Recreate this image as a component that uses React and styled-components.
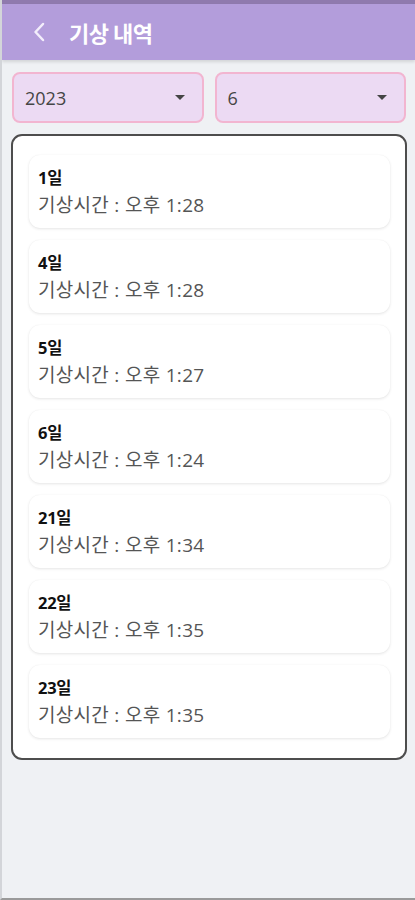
import React from "react";
import styled, { createGlobalStyle } from "styled-components";

const Global = createGlobalStyle`
  html, body { margin: 0; padding: 0; }
  body { background: #eff1f4; font-family: "Open Sans", "Noto Sans CJK KR", sans-serif; }
  * { box-sizing: border-box; }
`;

const Screen = styled.div`
  width: 415px;
  height: 900px;
  background: #eff1f4;
  border-left: 2px solid #d3d5d9;
  border-bottom: 2px solid #9a9a9a;
  display: flex;
  flex-direction: column;
  overflow: hidden;
`;

const StatusStrip = styled.div`
  height: 4px;
  background: #8f7aae;
`;

const Header = styled.header`
  height: 56px;
  background: #b39ddb;
  display: flex;
  align-items: center;
  padding-left: 29px;
  gap: 23px;
  box-shadow: 0 2px 3px rgba(0, 0, 0, 0.12);
`;

const Title = styled.h1`
  margin: 0;
  color: #ffffff;
  font-family: "Noto Sans CJK KR", sans-serif;
  font-size: 22px;
  font-weight: 700;
  letter-spacing: -0.5px;
`;

const Selects = styled.div`
  display: grid;
  grid-template-columns: 1fr 1fr;
  gap: 11px;
  padding: 12px 9px 0 10px;
`;

const Select = styled.div`
  height: 51px;
  background: #ecdaf3;
  border: 2px solid #f2b5d0;
  border-radius: 8px;
  display: flex;
  align-items: center;
  justify-content: space-between;
  padding: 0 17px 0 11px;
  color: #454545;
  font-size: 18px;
`;

const Caret = styled.span`
  width: 0;
  height: 0;
  border-left: 5px solid transparent;
  border-right: 5px solid transparent;
  border-top: 5px solid #444;
`;

const ListBox = styled.div`
  margin: 11px 8px 0 9px;
  background: #ffffff;
  border: 2px solid #4d4d4d;
  border-radius: 11px;
  padding: 19px 15px 20px 16px;
  display: flex;
  flex-direction: column;
  gap: 12px;
`;

const Card = styled.div`
  height: 73px;
  background: #fff;
  border-radius: 11px;
  box-shadow: 0 1px 3px rgba(0, 0, 0, 0.1), 0 0 1px rgba(0, 0, 0, 0.06);
  padding: 8px 9px 8px;
  display: flex;
  flex-direction: column;
  justify-content: center;
`;

const Day = styled.div`
  font-size: 16.5px;
  font-weight: 700;
  color: #111;
  line-height: 26px;
  letter-spacing: -0.3px;
`;

const Time = styled.div`
  font-size: 19px;
  color: #555;
  line-height: 28px;
  letter-spacing: 0.3px;
`;

const items = [
  ["1", "오후 1:28"],
  ["4", "오후 1:28"],
  ["5", "오후 1:27"],
  ["6", "오후 1:24"],
  ["21", "오후 1:34"],
  ["22", "오후 1:35"],
  ["23", "오후 1:35"],
];

export default function App() {
  return (
    <>
      <Global />
      <Screen>
        <StatusStrip />
        <Header>
          <svg width="15" height="22" viewBox="0 0 15 22">
            <path d="M12 3 L4.5 11 L12 19" fill="none" stroke="#f3eefb" strokeWidth="2.5" strokeLinecap="round" strokeLinejoin="round" />
          </svg>
          <Title>기상 내역</Title>
        </Header>
        <Selects>
          <Select>2023<Caret /></Select>
          <Select>6<Caret /></Select>
        </Selects>
        <ListBox>
          {items.map(([d, t]) => (
            <Card key={d}>
              <Day>{d}일</Day>
              <Time>기상시간 : {t}</Time>
            </Card>
          ))}
        </ListBox>
      </Screen>
    </>
  );
}
